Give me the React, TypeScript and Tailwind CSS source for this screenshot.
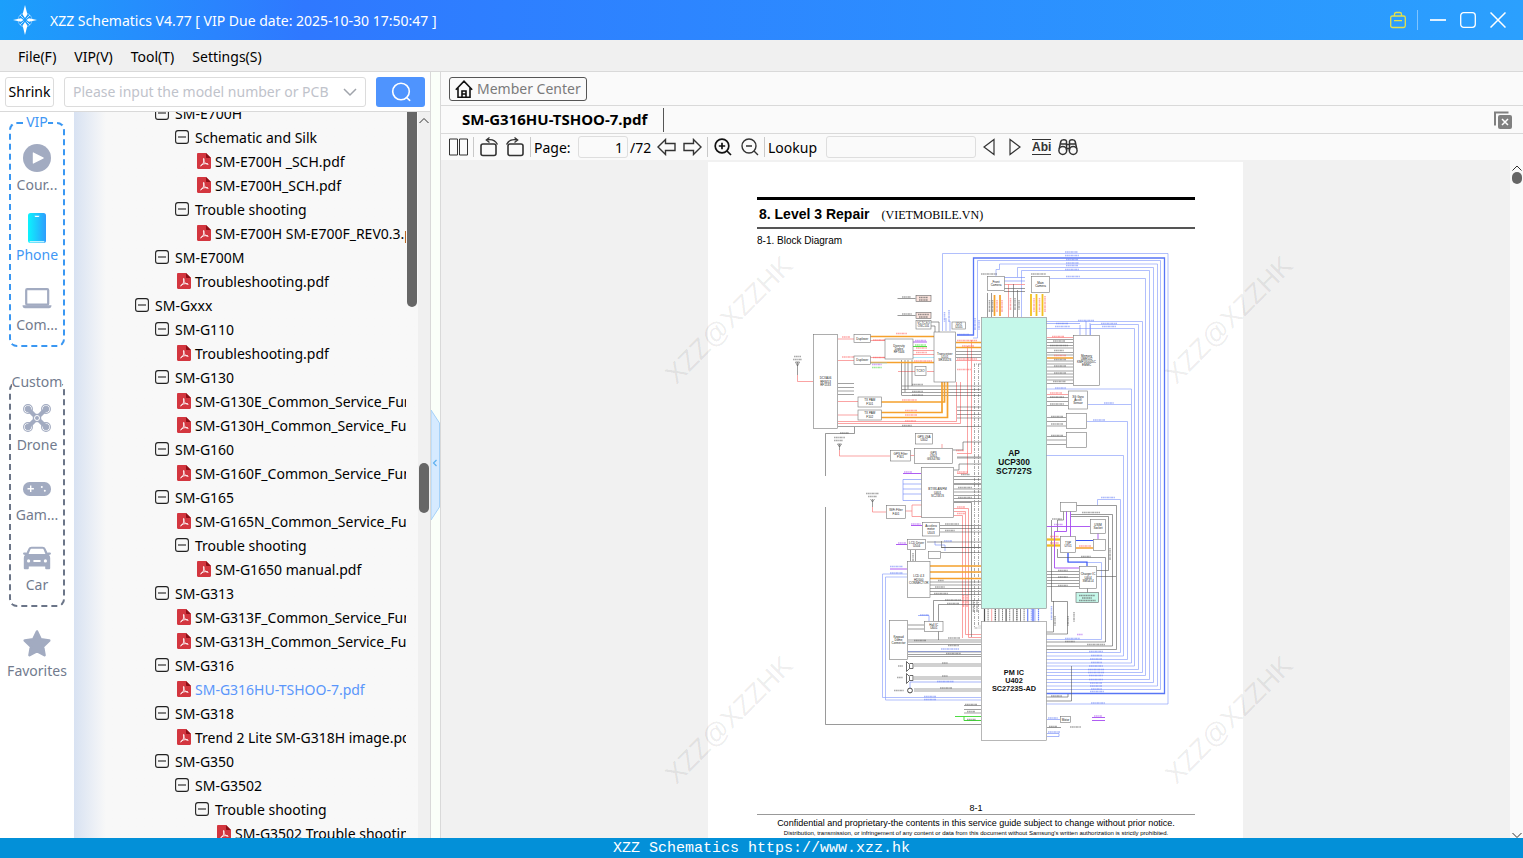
import { type ReactNode } from "react";

type TreeItem = {
	label: string;
	depth: number;
	kind: "folder" | "file";
	active?: boolean;
};

const folder = (depth: number, label: string): TreeItem => ({ depth, label, kind: "folder" });
const file = (depth: number, label: string, active = false): TreeItem => ({
	depth,
	label,
	kind: "file",
	active,
});

const tree: TreeItem[] = [
	folder(1, "SM-E700H"),
	folder(2, "Schematic and Silk"),
	file(3, "SM-E700H _SCH.pdf"),
	file(3, "SM-E700H_SCH.pdf"),
	folder(2, "Trouble shooting"),
	file(3, "SM-E700H SM-E700F_REV0.3.pdf"),
	folder(1, "SM-E700M"),
	file(2, "Troubleshooting.pdf"),
	folder(0, "SM-Gxxx"),
	folder(1, "SM-G110"),
	file(2, "Troubleshooting.pdf"),
	folder(1, "SM-G130"),
	file(2, "SM-G130E_Common_Service_Functions.pdf"),
	file(2, "SM-G130H_Common_Service_Functions.pdf"),
	folder(1, "SM-G160"),
	file(2, "SM-G160F_Common_Service_Functions.pdf"),
	folder(1, "SM-G165"),
	file(2, "SM-G165N_Common_Service_Functions.pdf"),
	folder(2, "Trouble shooting"),
	file(3, "SM-G1650 manual.pdf"),
	folder(1, "SM-G313"),
	file(2, "SM-G313F_Common_Service_Functions.pdf"),
	file(2, "SM-G313H_Common_Service_Functions.pdf"),
	folder(1, "SM-G316"),
	file(2, "SM-G316HU-TSHOO-7.pdf", true),
	folder(1, "SM-G318"),
	file(2, "Trend 2 Lite SM-G318H image.pdf"),
	folder(1, "SM-G350"),
	folder(2, "SM-G3502"),
	folder(3, "Trouble shooting"),
	file(4, "SM-G3502 Trouble shooting.pdf"),
];

const indents = ["pl-[61px]", "pl-[81px]", "pl-[101px]", "pl-[121px]", "pl-[141px]"];

const Logo = () => (
	<svg width="26" height="30" viewBox="0 0 26 30" fill="#fff">
		<circle cx="13" cy="15" r="7" fill="none" stroke="#7cc4ff" strokeWidth="1" />
		<path d="M13 0l2.4 9.5L13 13l-2.4-3.5zM13 30l2.4-9.5L13 17l-2.4 3.5zM1 15l8-1.8L11.5 15 9 16.8zM25 15l-8-1.8L14.5 15l2.5 1.8z" />
		<path d="M8 10l3.6 3.6M18 10l-3.6 3.6M8 20l3.6-3.6M18 20l-3.6-3.6" stroke="#bfe2ff" strokeWidth="1" />
	</svg>
);

const MinusBox = () => (
	<svg width="14" height="14" viewBox="0 0 14 14" fill="none" stroke="#222">
		<rect x=".6" y=".6" width="12.8" height="12.8" rx="2.4" strokeWidth="1.1" />
		<path d="M3 7h8" strokeWidth="1.1" />
	</svg>
);

const PdfIcon = () => (
	<svg width="14" height="16" viewBox="0 0 14 16">
		<path d="M1.2 0H9l5 5v9.8c0 .7-.5 1.2-1.2 1.2H1.2C.5 16 0 15.500 0 14.800V1.200C0 .5.5 0 1.200 0z" fill="#d3363f" />
		<path d="M9 0l5 5H10c-.6 0-1-.4-1-1z" fill="#8e1018" />
		<path
			d="M6.600 5.600c.9 0 .6 1.900 0 3.500-.7 1.800-1.800 3.400-2.600 3.900M6.600 5.600c-.6.600 0 2.600 1 3.700 1 1.200 2.400 2 3.400 2.100M3.800 12.300c1.500-1.400 4.200-2 6.800-1.600"
			fill="none"
			stroke="#fff"
			strokeWidth=".9"
			strokeLinecap="round"
		/>
	</svg>
);

const PlayIcon = () => (
	<svg width="28" height="30" viewBox="0 0 28 30">
		<circle cx="14" cy="15" r="14" fill="#a2abc1" />
		<path d="M9.800 9.800v10.400c0 .4.400.6.700.4l10-5.200c.4-.2.4-.6 0-.8l-10-5.200c-.3-.2-.7 0-.7.400z" fill="#fff" />
	</svg>
);

const PhoneIcon = () => (
	<svg width="28" height="30" viewBox="0 0 28 30">
		<defs>
			<linearGradient id="phone">
				<stop offset="0" stopColor="#0cf3fd" />
				<stop offset="1" stopColor="#2e9dfd" />
			</linearGradient>
		</defs>
		<rect x="5" y="0" width="18" height="30" rx="2.500" fill="url(#phone)" />
		<rect x="6.500" y="28" width="15" height="1.400" rx=".7" fill="#bff4ff" />
		<path d="M11.500 2.700h5c-.4 1-.8 1.300-1.500 1.300h-2c-.7 0-1.100-.3-1.500-1.300z" fill="#fff" />
	</svg>
);

const LaptopIcon = () => (
	<svg width="30" height="30" viewBox="0 0 30 30" fill="none" stroke="#a2abc1">
		<rect x="4.200" y="6.200" width="22" height="15.500" rx="1" strokeWidth="2.200" />
		<path d="M.5 22.300h29c0 1.900-1 2.900-2.500 2.900H3C1.500 25.200.5 24.200.5 22.300z" fill="#a2abc1" stroke="none" />
	</svg>
);

const rotors = [
	[5, 6],
	[23, 6],
	[5, 24],
	[23, 24],
];

const DroneIcon = () => (
	<svg width="28" height="30" viewBox="0 0 28 30">
		<path d="M6.500 7.500L14 15l7.500-7.500M6.500 22.500L14 15l7.500 7.500" fill="none" stroke="#a2abc1" strokeWidth="4.400" />
		{rotors.map(([x, y]) => (
			<g key={`${x}-${y}`} fill="none" stroke="#a2abc1">
				<circle cx={x} cy={y} r="4.400" strokeWidth="1.100" />
				<circle cx={x} cy={y} r="2.800" fill="#a2abc1" strokeWidth="1" />
			</g>
		))}
		<circle cx="14" cy="15" r="4.300" fill="#a2abc1" />
		<circle cx="14" cy="15" r="2.500" fill="none" stroke="#fff" strokeWidth="1" />
	</svg>
);

const GamepadIcon = () => (
	<svg width="28" height="30" viewBox="0 0 28 30">
		<rect x="0" y="9" width="28" height="14" rx="6.500" fill="#a2abc1" />
		<path d="M4.500 15.800h6.400M7.700 12.600v6.400" stroke="#fff" strokeWidth="1.400" />
		<circle cx="18.800" cy="14" r="1" fill="#fff" />
		<circle cx="21.800" cy="17.800" r="1" fill="#fff" />
	</svg>
);

const CarIcon = () => (
	<svg width="28" height="30" viewBox="0 0 28 30" fill="#a2abc1">
		<path
			fillRule="evenodd"
			d="M0 10.500c0-.9 1.300-1.500 3.500-.7L5.300 6c.6-1.600 1.700-2.300 3.300-2.300h10.800c1.600 0 2.700.7 3.300 2.300l1.800 3.800c2.200-.8 3.500-.2 3.500.7 0 .8-.8 1.300-2 1.500.8.8 1.200 1.800 1.200 3v10.300c0 .6-.3.900-.9.900h-3.200c-.6 0-.9-.3-.9-.9v-1.700H5.800v1.700c0 .6-.3.900-.9.900H1.700c-.6 0-.9-.3-.9-.9V15c0-1.200.4-2.200 1.200-3-1.200-.2-2-.7-2-1.500zM7.300 6.800L5.600 11h16.800l-1.700-4.200c-.3-.8-.7-1.100-1.500-1.100H8.800c-.8 0-1.200.3-1.500 1.100zM5.600 16.300a1.600 1.600 0 100 3.200 1.600 1.600 0 000-3.200zm16.800 0a1.600 1.600 0 100 3.200 1.600 1.600 0 000-3.200zM11.200 17a1 1 0 000 2h5.600a1 1 0 000-2z"
		/>
	</svg>
);

const StarIcon = () => (
	<svg width="28" height="30" viewBox="0 0 28 30">
		<path
			d="M14 2.500l3.700 7.800 8.500 1.200-6.200 6 1.500 8.700-7.500-4.200-7.500 4.200L8 17.500l-6.200-6 8.500-1.200z"
			fill="#a2abc1"
			stroke="#a2abc1"
			strokeWidth="2.600"
			strokeLinejoin="round"
		/>
	</svg>
);

const SideButton = ({ icon, label, active }: { icon: ReactNode; label: string; active?: boolean }) => (
	<button className="flex h-[70px] w-full shrink-0 flex-col items-center">
		<span className="flex h-[30px] items-center">{icon}</span>
		<span className={active ? "leading-6 text-[#3f97f5]" : "leading-6 text-[#727b8e]"}>{label}</span>
	</button>
);

const TitleBar = () => (
	<header className="flex h-10 shrink-0 items-center bg-linear-to-r from-[#1b9ffb] via-[#2f78ff] via-20% to-[#2ba0fe] pr-[17px] pl-3 text-white">
		<Logo />
		<h1 className="ml-3 flex-1">XZZ Schematics V4.77 [ VIP Due date: 2025-10-30 17:50:47 ]</h1>
		<button aria-label="License" className="mr-[11px]">
			<svg width="16" height="18" viewBox="0 0 16 18" fill="none" stroke="#e4e14a" strokeWidth="1.300">
				<rect x=".7" y="5" width="14.600" height="11.500" rx="1.800" />
				<path d="M4.500 5V3.300C4.500 2 5 1.500 6.300 1.500h3.400c1.300 0 1.800.5 1.800 1.800V5M4 9.700h8" />
			</svg>
		</button>
		<span className="mr-3 h-5 w-px bg-white/40" />
		<button aria-label="Minimize" className="mr-[14px]">
			<svg width="16" height="16" viewBox="0 0 16 16" stroke="#fff" strokeWidth="1.700">
				<path d="M0 8h16" />
			</svg>
		</button>
		<button aria-label="Maximize" className="mr-[14px]">
			<svg width="16" height="16" viewBox="0 0 16 16" fill="none" stroke="#fff" strokeWidth="1.300">
				<rect x=".7" y=".7" width="14.600" height="14.600" rx="3" />
			</svg>
		</button>
		<button aria-label="Close">
			<svg width="16" height="16" viewBox="0 0 16 16" stroke="#fff" strokeWidth="1.500">
				<path d="M.5.5l15 15M15.500.5l-15 15" />
			</svg>
		</button>
	</header>
);

const MenuBar = () => (
	<nav className="flex h-8 shrink-0 items-center gap-[18px] border-b border-[#d9d9d9] bg-[#f0f0f0] px-[18px] pt-0.5">
		<button>File(F)</button>
		<button>VIP(V)</button>
		<button>Tool(T)</button>
		<button>Settings(S)</button>
	</nav>
);

const SearchBar = () => (
	<div className="flex h-10 shrink-0 items-center border-b border-[#d9d9d9] bg-white px-[5px]">
		<button className="h-[30px] w-[49px] rounded-[3px] border border-[#dcdcdc]">Shrink</button>
		<div className="mx-2.5 flex h-[30px] flex-1 items-center rounded-[3px] border border-[#dcdcdc] px-2">
			<input
				aria-label="Model number"
				placeholder="Please input the model number or PCB"
				className="min-w-0 flex-1 outline-none placeholder:text-[#bfc3cb]"
			/>
			<button aria-label="History" className="pl-1">
				<svg width="14" height="14" viewBox="0 0 14 14" fill="none" stroke="#a0a4ab" strokeWidth="1.500">
					<path d="M1 4l6 6 6-6" />
				</svg>
			</button>
		</div>
		<button aria-label="Search" className="flex h-[30px] w-[49px] items-center justify-center rounded-[3px] bg-[#4f94fe]">
			<svg width="20" height="20" viewBox="0 0 20 20" fill="none" stroke="#fff" strokeWidth="1.600">
				<circle cx="10" cy="9.500" r="8.300" />
				<path d="M15.500 15.500l3.200 2.800" strokeLinecap="round" />
			</svg>
		</button>
	</div>
);

const SideNav = () => (
	<nav className="flex w-[74px] shrink-0 flex-col items-center bg-white pt-2.5">
		<section className="flex h-[225px] w-14 flex-col items-center rounded-lg border-2 border-dashed border-[#3a97f2]">
			<h2 className="-mt-3 mb-[11px] h-5 shrink-0 bg-white leading-5 text-[#3f97f5]">VIP</h2>
			<SideButton icon={<PlayIcon />} label="Cour..." />
			<SideButton icon={<PhoneIcon />} label="Phone" active />
			<SideButton icon={<LaptopIcon />} label="Com..." />
		</section>
		<section className="mt-[35px] flex h-[225px] w-14 flex-col items-center rounded-lg border-2 border-dashed border-[#6b7588]">
			<h2 className="-mt-3 mb-[11px] h-5 shrink-0 bg-white leading-5 text-[#727b8e]">Custom</h2>
			<SideButton icon={<DroneIcon />} label="Drone" />
			<SideButton icon={<GamepadIcon />} label="Gam..." />
			<SideButton icon={<CarIcon />} label="Car" />
		</section>
		<div className="mt-[22px]">
			<SideButton icon={<StarIcon />} label="Favorites" />
		</div>
	</nav>
);

const TreeView = () => (
	<div className="flex min-w-0 flex-1 overflow-hidden bg-[#f8f8f8] bg-linear-to-r from-[#d8e2f2] to-[#f8f8f8] to-[32px]">
		<ul className="-mt-[11px] min-w-0 flex-1 overflow-hidden">
			{tree.map((item, index) => (
				<li key={index} className={indents[item.depth]}>
					<button
						className={
							item.active
								? "flex h-6 items-center whitespace-nowrap text-[#5a96fb]"
								: "flex h-6 items-center whitespace-nowrap text-black"
						}
					>
						<span className="flex w-5 shrink-0">
							{item.kind === "folder" ? (
								<MinusBox />
							) : (
								<span className="pl-0.5">
									<PdfIcon />
								</span>
							)}
						</span>
						{item.label}
					</button>
				</li>
			))}
		</ul>
		<div className="w-3 shrink-0 pl-px">
			<div className="h-[195px] w-2.5 rounded-b-full bg-[#666]" />
		</div>
	</div>
);

const OuterScroll = () => (
	<div className="flex w-3 shrink-0 flex-col items-center bg-[#f0f0f0]">
		<svg className="mt-1 shrink-0" width="10" height="10" viewBox="0 0 10 10" fill="none" stroke="#333">
			<path d="M.5 7L5 2.500 9.500 7" />
		</svg>
		<div className="mt-[337px] h-[50px] w-2.5 shrink-0 rounded-full bg-[#666]" />
	</div>
);

const Splitter = () => (
	<div className="flex w-[11px] shrink-0 items-center border-x border-[#d9d9d9] bg-[#fafff9] pt-5">
		<button aria-label="Collapse panel">
			<svg width="9" height="110" viewBox="0 0 9 110">
				<path d="M0 0l8.500 13v84L0 110z" fill="#d6eaff" stroke="#a5d1f8" />
				<path d="M5.500 50L2.500 53l3 3" fill="none" stroke="#5eb0f0" strokeWidth="1.200" />
			</svg>
		</button>
	</div>
);

const Rotate = ({ flip }: { flip?: boolean }) => (
	<svg
		className={flip ? "-scale-x-100" : ""}
		width="20"
		height="20"
		viewBox="0 0 20 20"
		fill="none"
		stroke="#333"
		strokeWidth="1.600"
	>
		<rect x="2" y="7" width="15" height="11.500" rx="2" />
		<path d="M7.500 3c5-1.200 9 .5 11 4.500M10.500.5L7.300 3l3.200 2.500" strokeWidth="1.300" />
	</svg>
);

const Divider = () => <span className="h-5 w-px shrink-0 bg-[#c9c9c9]" />;

const Toolbar = () => (
	<div className="flex h-[26px] shrink-0 items-center bg-[#fafafa] pl-2">
		<button aria-label="Two pages" className="mr-1">
			<svg width="20" height="18" viewBox="0 0 20 18" fill="none" stroke="#333">
				<path d="M.5 1h8v16h-8zM10.500 1h8v16h-8z" />
			</svg>
		</button>
		<Divider />
		<button aria-label="Rotate left" className="ml-[5px]">
			<Rotate />
		</button>
		<button aria-label="Rotate right" className="mr-[5px] ml-1.5">
			<Rotate flip />
		</button>
		<Divider />
		<label htmlFor="page" className="ml-[3px] w-[44px]">
			Page:
		</label>
		<input
			id="page"
			defaultValue="1"
			className="h-[22px] w-[50px] rounded-[3px] border border-[#dedede] px-1 text-right"
		/>
		<span className="ml-0.5 w-[27px]">/72</span>
		<button aria-label="Previous page">
			<svg width="20" height="18" viewBox="0 0 20 18" fill="none" stroke="#333" strokeWidth="1.400">
				<path d="M1 9l7.500-7.500V5.500H18v7H8.500v4z" />
			</svg>
		</button>
		<button aria-label="Next page" className="mr-[5px] ml-[5px]">
			<svg width="20" height="18" viewBox="0 0 20 18" fill="none" stroke="#333" strokeWidth="1.400">
				<path d="M19 9l-7.500-7.500V5.500H2v7h9.500v4z" />
			</svg>
		</button>
		<Divider />
		<button aria-label="Zoom in" className="ml-1.5">
			<svg width="18" height="18" viewBox="0 0 18 18" fill="none" stroke="#111" strokeWidth="1.700">
				<circle cx="8" cy="8" r="6.800" />
				<path d="M4.800 8h6.400M8 4.800v6.400M13 13l4 4" />
			</svg>
		</button>
		<button aria-label="Zoom out" className="mr-[5px] ml-[9px]">
			<svg width="18" height="18" viewBox="0 0 18 18" fill="none" stroke="#333" strokeWidth="1.400">
				<circle cx="8" cy="8" r="7" />
				<path d="M5 8h6M13 13l4 4" />
			</svg>
		</button>
		<Divider />
		<label htmlFor="lookup" className="ml-[3px] w-[58px]">
			Lookup
		</label>
		<input id="lookup" className="h-[22px] w-[150px] rounded-[3px] border border-[#dedede] px-1" />
		<button aria-label="Find previous" className="mr-3.5 ml-[7px]">
			<svg width="12" height="18" viewBox="0 0 12 18" fill="none" stroke="#333" strokeWidth="1.200">
				<path d="M11 1.500v15L1 9z" />
			</svg>
		</button>
		<button aria-label="Find next" className="mr-[11px]">
			<svg width="12" height="18" viewBox="0 0 12 18" fill="none" stroke="#333" strokeWidth="1.200">
				<path d="M1 1.500v15L11 9z" />
			</svg>
		</button>
		<button className="mr-[7px] h-4 border-y border-[#333] font-['Liberation_Sans'] text-[12px] leading-[14px] font-bold text-[#333]">
			Abi
		</button>
		<button aria-label="Search document">
			<svg width="20" height="18" viewBox="0 0 20 18" fill="none" stroke="#333" strokeWidth="1.500">
				<circle cx="4.800" cy="12.500" r="3.900" />
				<circle cx="15.200" cy="12.500" r="3.900" />
				<path d="M1.200 11L2.800 3.500C3.200 1.500 8 1 8.500 3.200v9M18.800 11l-1.600-7.500C16.800 1.500 12 1 11.500 3.200v9M8.500 6.500h3M8.500 10.500h3M3 6h5M12 6h5" />
			</svg>
		</button>
	</div>
);

const nested = [
	"M942.500 331V253.500H1168V704H1046",
	"M977.500 338H973M977.500 338V260.500H1160.500V689.500H1046",
	"M996 276V269.500H999.500V264H1157.500V686H1046",
	"M1017.500 277V267.500H1153.500V682.500H1046",
	"M1021.500 317V270.500H1149.500V679.500H1046",
	"M1050 278.500H1145.500V675.500H1046",
	"M1046 321.500H1142.500V672.500H1046",
	"M1090.500 335V324.500H1138.500V669.500H1046",
	"M1046 328.500H1134.500V666H1046",
	"M1046 389H1131.500V663H1046M1088 404.500H1131",
	"M1087 421.500H1127.500V659.500H1046",
	"M1046 455.500H1123.500V656H1046",
	"M1097.500 505V499.500H1120.500V652.500H1046",
	"M1068 553V562.500H1101.500V639.500H1046",
];

// [x, y, width, height, caption lines]
const blocks: [number, number, number, number, string[]][] = [
	[813.5, 334.500, 24, 94, ["DCXA06", "RF8453", "RF1533"]],
	[854, 334.500, 16.500, 8, ["Duplexer"]],
	[854, 356, 16.500, 8.500, ["Duplexer"]],
	[885, 339, 28, 20, ["Diversity", "Diplex", "RF7446"]],
	[934, 332, 21.500, 50, ["Transceiver", "U101", "SR3532S"]],
	[952, 322, 13.500, 7, ["LDO", "U105"]],
	[916, 320.500, 15, 8.500, ["VCTCXO", "OSC101"]],
	[915, 366.500, 11, 9, ["TCXO"]],
	[858, 397, 23.500, 10, ["TX PAM", "F101"]],
	[858, 410, 23.500, 10, ["TX PAM", "F102"]],
	[987.500, 276.500, 17, 14, ["Front", "Camera"]],
	[1031.500, 276.500, 18, 16, ["Main", "Camera"]],
	[1073.500, 335.500, 26, 50, ["Memory", "UME502", "KMF5X0005C", "EMMC"]],
	[1068.500, 391, 19, 18, ["3G Gyro", "Accel", "Sensor"]],
	[1066.500, 413.500, 20, 15, []],
	[1066.500, 432.500, 20, 15, []],
	[890.500, 450.500, 20, 10.500, ["GPS Filter", "F301"]],
	[914.500, 448.500, 38, 15, ["GPS", "U301", "GSX4780"]],
	[915.500, 433.500, 17, 10.500, ["GPS LNA", "U302"]],
	[921.500, 467.500, 32, 50, ["BT/WLAN/FM", "U401", "SC2331S"]],
	[886.500, 505.500, 19, 13, ["WiFi Filter", "F401"]],
	[922.500, 522.500, 17, 13.500, ["Accelero", "meter", "U503"]],
	[907.500, 539.500, 18, 10, ["LCD Driver", "U504"]],
	[928.500, 551.500, 12, 7, []],
	[907.500, 561.500, 22.500, 36, ["LCD 4.3", "HD500", "CONNECTOR"]],
	[889.500, 620.500, 18, 39, ["Keypad", "Dome", "Connector"]],
	[924.500, 621.500, 18.500, 10, ["Hall IC", "U601"]],
	[1060.500, 502.500, 16, 9, []],
	[1090.500, 519.500, 15, 14, ["USIM", "Socket"]],
	[1060.500, 536.500, 15, 16, ["TSP", "U701"]],
	[1093.500, 539.500, 12, 11, []],
	[1079.500, 566.500, 17, 22, ["Charger IC", "U404", "SM5414"]],
	[1060.500, 716.500, 10, 6, ["Motor"]],
];

// lines to the AP and the PM IC, as [x1, x2, y]
const greyWires: [number, number, number][] = [
	[838, 981, 426.500],
	...[383.500, 387.500, 391, 394.500].map((y): [number, number, number] => [838, 854, y]),
	...[351.500, 354.500, 357.500].map((y): [number, number, number] => [956, 981, y]),
	...[386, 389.500, 392.500, 395.500].map((y): [number, number, number] => [902, 981, y]),
	...[407, 410.500, 414.500, 418, 457, 458].map((y): [number, number, number] => [957, 981, y]),
	...[476.500, 479.500, 483.500, 484.500, 489, 492, 495.500, 498.500, 501.500].map((y): [number, number, number] => [
		954, 981, y,
	]),
	...[525.500, 528.500, 532].map((y): [number, number, number] => [940, 981, y]),
	...[542, 547.500, 552.500].map((y): [number, number, number] => [941, 981, y]),
	...[582, 585, 588.500, 591.500, 594.500].map((y): [number, number, number] => [930, 981, y]),
	...[640, 642, 644.500, 652, 654.500, 656.500].map((y): [number, number, number] => [908, 981, y]),
	...[664, 666, 677, 679, 689, 691].map((y): [number, number, number] => [914, 981, y]),
	...[705.500, 709.500, 713, 720.500].map((y): [number, number, number] => [964, 981, y]),
	...[339.500, 342.500, 345.500, 348, 352.500, 355, 361, 364, 367, 371, 374, 377, 380, 383.500].map(
		(y): [number, number, number] => [1047, 1073, y],
	),
	...[397.500, 401.500, 405.500].map((y): [number, number, number] => [1047, 1068, y]),
	...[417.500, 421.500, 426, 436.500, 440, 444.500].map((y): [number, number, number] => [1047, 1066, y]),
	...[571.500, 574.500, 577.500, 580.500, 583.500, 586.500].map((y): [number, number, number] => [1047, 1079, y]),
];

// net names, as [x, y, width]
const greyNames: [number, number, number][] = [
	[902, 297, 9],
	[902, 314, 10],
	[981, 274, 16],
	[1031, 274, 15],
	[912, 384.500, 11],
	[912, 391.500, 11],
	[912, 395, 11],
	[902, 425.500, 10],
	[840, 433, 9],
	[961, 474.500, 9],
	[958, 487.500, 14],
	[958, 497.500, 14],
	[945, 524, 14],
	[945, 530.500, 10],
	[938, 580.500, 6],
	[935, 587, 10],
	[934, 593.500, 14],
	[945, 600, 16],
	[947, 603.500, 12],
	[948, 638, 12],
	[914, 640.500, 12],
	[948, 645.500, 11],
	[946, 653.500, 15],
	[942, 663, 6],
	[942, 676, 6],
	[940, 688, 12],
	[965, 704.500, 12],
	[967, 711.500, 8],
	[967, 719.500, 9],
	[1053, 341, 12],
	[1050, 345.500, 18],
	[1054, 350.500, 10],
	[1054, 359.500, 12],
	[1054, 366, 12],
	[1054, 373, 12],
	[1053, 381.500, 13],
	[1050, 397, 14],
	[1050, 404, 14],
	[1051, 416.500, 12],
	[1051, 424, 12],
	[1051, 435.500, 12],
	[1079, 415.500, 6],
	[1079, 434.500, 6],
	[1058, 570.500, 10],
	[1058, 577, 10],
	[1058, 585.500, 10],
	[1052, 519, 10],
	[1082, 512.500, 18],
	[1081, 556.500, 10],
	[1065, 641.500, 10],
	[1087, 644.500, 18],
	[1051, 696, 11],
	[1049, 726.500, 8],
	[1070, 727, 11],
	[898, 666, 5],
	[897, 677.500, 6],
	[894, 690.500, 10],
	[866, 493.500, 13],
	[868, 496.500, 9],
	[834, 437.500, 11],
	[834, 440.500, 9],
	[794, 356.500, 7],
	[793, 359.500, 9],
];

const blueNames: [number, number, number][] = [
	[1065, 252, 13],
	[1065, 255.500, 14],
	[1066, 259.500, 12],
	[1066, 263, 13],
	[1066, 265.500, 12],
	[1065, 269.500, 14],
	[1066, 276.500, 14],
	[1078, 320.500, 16],
	[1056, 323.500, 12],
	[1055, 326.500, 15],
	[1101, 323.500, 16],
	[1102, 326.500, 14],
	[1055, 388, 11],
	[1104, 403, 10],
	[1093, 420, 12],
	[1101, 497.500, 14],
	[1065, 638.500, 15],
	[1089, 651.500, 14],
	[1091, 655.500, 11],
	[1090, 659, 12],
	[1091, 662.500, 11],
	[1089, 666, 14],
	[1088, 669.500, 16],
	[1088, 672.500, 16],
	[1089, 675.500, 14],
	[1089, 679.500, 14],
	[1090, 683, 12],
	[1090, 686, 12],
	[1091, 689, 11],
	[1090, 691.500, 14],
	[1091, 703, 14],
	[1048, 718, 10],
	[1048, 732, 12],
	[890, 566.500, 13],
	[890, 573, 13],
	[924, 696.500, 12],
	[924, 699.500, 12],
	[941, 649, 18],
	[937, 681.500, 17],
	[920, 615, 9],
	[957, 334.500, 12],
	[944, 541, 8],
];

const redNames: [number, number, number][] = [
	[896, 333.500, 11],
	[842, 337, 8],
	[873, 340, 13],
	[842, 357, 12],
	[873, 357.500, 13],
	[916, 348, 11],
	[916, 352.500, 11],
	[914, 361, 18],
	[902, 400, 15],
	[905, 410.500, 12],
	[905, 415, 12],
	[905, 421, 11],
	[957, 340.500, 20],
	[962, 346, 12],
	[957, 359, 20],
	[957, 369.500, 14],
	[956, 450.500, 8],
	[957, 472, 11],
	[957, 507, 8],
	[957, 513.500, 8],
	[1052, 336.500, 12],
	[1054, 355.500, 12],
	[1050, 393, 12],
	[1050, 536.500, 9],
	[1050, 543, 9],
	[1079, 546, 12],
];

const names = (list: [number, number, number][]) => list.map(([x, y, w]) => `M${x} ${y}h${w}`).join("");

const BlockDiagram = () => (
	<svg
		className="w-full"
		viewBox="757 248 438 499"
		fill="none"
		strokeWidth=".6"
		fontFamily="Liberation Sans"
		role="img"
		aria-label="Block diagram"
	>
		<path d={nested.join("")} stroke="#8fa3fa" strokeWidth=".7" />
		<path d="M957 335H973.500V258H1164.500V693.500H1046" stroke="#5876f5" strokeWidth="1.300" />
		<path d="M981 697.500H882.500V574H907M981 700H885.500V577H907" stroke="#8fa3fa" strokeWidth=".7" />
		<path
			d="M903 479.500h18.500M903 484h18.500M903 489h18.500M903 494h18.500M903 500.500h18.500M903 479.500v21M908 651.500h73M910 688v-6h71M1004 277.500h21M1004 281h21M1090 335v-12M1086 335v-14M1080 335v-10M1046 323.500h34M946 331v-13M950 331v-10M1047 719.500h13M1047 733.500h12v3h-12M918 615.500h11v6M935 541v4h10v6"
			stroke="#6b84f7"
		/>
		<path d="M1076 540.500h17M1068 553v9h19v4M1033 609v13" stroke="#3b56f5" strokeWidth="1.200" />

		<path
			d="M838 339H854M838 360.500H854M870 340.500h15M870 357.500h15M913 350.500h21M913 354.500h21M934 371.500h-7M915 371.500h-17M838 401.500h20M838 415h20M838 421.500H956.500V382M838 423.500H960.500V382M797.500 375V381.500H813M839.500 450V456H890M910 455.500h4M872.500 507V512H886M905 511h7v-6h10M912 511v5.500h10M957 453.500H971.500V340M957 473.500H967.500V346M954 508.500H968.500V637.500H981M954 511.500H965.500V634.500H981M954 515.500H962.500V638M1004 284.500h21M1008.500 284v33M956 360.500h25M1047 337.500h26M1047 394.500h21M942 444v4"
			stroke="#f87b7b"
			strokeWidth=".7"
		/>
		<path d={greyWires.map(([a, b, y]) => `M${a} ${y}H${b}`).join("")} stroke="#444" strokeWidth=".5" />
		<path
			d="M825.500 476V433.500H854.500V427M825.500 507V724.500H981M797.500 362v13M795.500 362l2 4 2-4zM839.500 444v6M837.500 444l2 3 2-3zM872.500 499v8M870.500 499l2 3 2-3M901.500 360v35.500M905 360v32M908 360v29M912 360v26M897.500 298.500h18M897.500 315.500h18M931 322h8v10M931 326h4v6M981 442h-18v8h-10M981 464h-22v6h-5M910.500 550v11M915.500 550v11M981 547.500H941.500V541M941 542h-14M981 600.500H933.500V621M981 604.500H938.500V640M908 625h16M908 629h16M1004 288.500h21M1004 291.500h21M1013.500 284v33M1017.500 290v27M987.500 293v24M991.500 293v24M1076.500 505.500H1116.500V649.500H1046M1071 514.500H1112.500V646H1046M1071 516.500H1108.500V570.500h-12M1096 576.500h20M1057.500 532v-12h6v-9M1051.500 520V601.500H1067.500V634H1046M1053.500 601V632H1046M1057.500 549V557.500H1105.500V642H1046M1071.500 666V701H1046M1068 694V697H1046M1047 727.500h14M1087.500 588v5M954 502.500H971.500V637"
			stroke="#555"
			strokeWidth=".6"
		/>
		<path
			d="M974.500 364V628H981M978.500 364V626H981M981 364h-7"
			stroke="#555"
			strokeWidth=".5"
			strokeDasharray="3 1 1 1"
		/>

		{/* power rails */}
		<path
			d="M870 336.500H934M870 362.500H934M881 402H944.500V382M881 412.500H942V382M881 417.500H947.500V382M956 342.500H981M956 347.500H981M930 566H981M930 572H981M930 578.500H981M1047 358H1073M994.500 295v21M1000 295v21M1047 539.500h13M1047 545.500h13M1076 548h17"
			stroke="#f5a12c"
			strokeWidth="1.700"
		/>
		<path d="M1031 294v22M1036.500 294v22M1042.500 294v22M1047 539.500h13M1047 545.500h13" stroke="#f2c11f" strokeWidth="1.800" />
		<path
			d="M1047 526.500H1090M1066.500 511V531.500H1054.500V568H1079M1070.500 511v26M1098 533v6M1092 717.500h13M1092 720.500h13M903 473.500h18M911 525.500h11M896 544.500h11M913 342h14M890 569h17"
			stroke="#a64bf0"
			strokeWidth=".9"
		/>
		<path d="M955 716.500H981M964 716.500v4h17M913 346.500h14" stroke="#3ad82e" strokeWidth=".9" />
		<path d="M913 357.500h21M870 363h17" stroke="#7fd9f2" strokeWidth=".6" />

		{/* bus between the two chips */}
		{Array.from({ length: 16 }, (_, i) => (
			<path
				key={i}
				d={`M${984.500 + i * 3.600} 609v13`}
				stroke={i === 2 ? "#f87b7b" : i > 11 ? "#6b84f7" : "#555"}
				strokeWidth={i % 3 === 0 ? 1.200 : 0.7}
				strokeDasharray={i % 2 ? "1.500 .5" : undefined}
			/>
		))}
		<g strokeWidth="1.500" strokeDasharray="1.300 .4 2 .5" opacity=".5">
			<path d={names(greyNames)} stroke="#555" />
			<path d={names(blueNames)} stroke="#5b76f6" />
			<path d={names(redNames)} stroke="#f55" />
			<path
				d="M989.500 300v12M992.500 300v12M1015 298v12M1019 300v10M973.500 600v12M977 600v12M1055 616v10M1068 616v10M1074 612v10M1110 548v12M913 553v8"
				stroke="#555"
			/>
			<path d="M997 300v12M1002 300v12M1010.500 298v12M1034 298v14M1039.500 298v14M1045 296v16M963.500 595v12M967 595v12" stroke="#f55" />
			<path d="M1051.500 606v14M944.500 312v10M949 310v12M975 318v12M979 320v10" stroke="#5b76f6" />
			<path d="M872 367.500h10M915 345h11" stroke="#3ad82e" />
			<path d="M904 472h8M911 524h10M898 543h8M872 364.500h10M915 340.500h11M1054 524.500h9M1077 634.500h6M1094 716h8" stroke="#a64bf0" />
		</g>

		<g stroke="#666" strokeWidth=".6">
			<rect x="916" y="295.500" width="15" height="6" fill="#fbe3dd" />
			<rect x="916" y="312.500" width="15" height="6" fill="#fbe3dd" />
			<rect x="1076" y="592.500" width="22.500" height="10" fill="#c5f8ea" />
		</g>
		<path
			d="M919 297.500h9M919 300h9M918 314.500h11M919 317h9M1079 595.500h16M1082 598h10M1079 600.500h17"
			stroke="#666"
			strokeWidth="1.300"
			strokeDasharray="1.300 .4"
			opacity=".7"
		/>
		{blocks.map(([x, y, w, h, lines]) => (
			<g key={`${x}-${y}`}>
				<rect x={x} y={y} width={w} height={h} fill="#fff" stroke="#777" />
				<text fontSize="3" textAnchor="middle" fill="#222">
					{lines.map((line, i) => (
						<tspan key={i} x={x + w / 2} y={y + h / 2 + 1 + (i - (lines.length - 1) / 2) * 3.300}>
							{line}
						</tspan>
					))}
				</text>
			</g>
		))}

		{/* speakers and microphone */}
		<path
			d="M906.500 661.500l3 3v4l-3 3zM909.500 663.500h3.500v5h-3.500M906.500 673.500l3 3v4l-3 3zM909.500 675.500h3.500v5h-3.500"
			stroke="#444"
			strokeWidth=".8"
		/>
		<circle cx="910" cy="690.500" r="2.400" stroke="#333" strokeWidth=".9" fill="#fff" />

		<rect x="981.500" y="317.500" width="65" height="291" fill="#c5f8ea" stroke="#888" />
		<rect x="981.500" y="621.500" width="65" height="119" fill="#fff" stroke="#888" />
		<g fill="#111" fontWeight="bold" textAnchor="middle" fontSize="8.400">
			<text>
				<tspan x="1014" y="456">AP</tspan>
				<tspan x="1014" y="465">UCP300</tspan>
				<tspan x="1014" y="474">SC7727S</tspan>
			</text>
			<text fontSize="7.300">
				<tspan x="1014" y="675">PM IC</tspan>
				<tspan x="1014" y="683">U402</tspan>
				<tspan x="1014" y="691">SC2723S-AD</tspan>
			</text>
		</g>
	</svg>
);

const Watermark = ({ className }: { className: string }) => (
	<span
		className={`pointer-events-none absolute -translate-x-1/2 -translate-y-1/2 -rotate-45 font-['Liberation_Sans'] text-[27px] text-black/8 ${className}`}
	>
		XZZ@XZZHK
	</span>
);

const PdfPage = () => (
	<article className="relative mt-0.5 h-full w-[535px] shrink-0 bg-white pt-[35px] pr-12 pl-[49px] font-['Liberation_Sans'] text-black">
		<h2 className="flex h-8 items-center border-t-[3px] border-b-2 border-t-black border-b-[#555] pt-0.5 pl-0.5 text-[14px] font-bold">
			8. Level 3 Repair
			<span className="ml-3 font-['Liberation_Serif'] text-[12px] font-normal">(VIETMOBILE.VN)</span>
		</h2>
		<h3 className="mt-1 h-[15px] text-[10px] leading-[15px]">8-1. Block Diagram</h3>
		<BlockDiagram />
		<p className="mt-[56px] h-2.5 text-center text-[9px] leading-[10px]">8-1</p>
		<footer className="mt-px border-t border-[#999] pt-0.5 text-center whitespace-nowrap">
			<p className="h-3 text-[9px] leading-3">
				Confidential and proprietary-the contents in this service guide subject to change without prior notice.
			</p>
			<p className="text-[6px] leading-[9px]">
				Distribution, transmission, or infringement of any content or data from this document without Samsung's written
				authorization is strictly prohibited.
			</p>
		</footer>
		<Watermark className="top-[158px] left-[21px]" />
		<Watermark className="top-[158px] left-[521px]" />
		<Watermark className="top-[558px] left-[21px]" />
		<Watermark className="top-[558px] left-[521px]" />
	</article>
);

const Viewer = () => (
	<main className="flex min-w-0 flex-1 flex-col bg-[#fafafa]">
		<div className="flex h-[34px] shrink-0 items-center border-b border-[#d9d9d9] pl-2">
			<button className="flex h-6 items-center gap-1 rounded-[3px] border border-[#555] px-[5px] text-[#7a7a7a]">
				<svg width="18" height="18" viewBox="0 0 18 18" fill="none" stroke="#111" strokeWidth="1.600">
					<path d="M.8 9.800L9 1.200l8.200 8.600M3 8v9.200h12V8M7 17v-6h4v6M7 14h4" />
				</svg>
				Member Center
			</button>
		</div>
		<div className="flex h-7 shrink-0 items-center border-b border-[#d9d9d9] pr-[11px] pl-[21px]">
			<button className="h-6 border-r border-[#555] pr-4 text-[15px] font-bold text-black">SM-G316HU-TSHOO-7.pdf</button>
			<button aria-label="Close all tabs" className="ml-auto">
				<svg width="18" height="18" viewBox="0 0 18 18" fill="none">
					<path d="M1 14.500V1.500h13.500" stroke="#808080" strokeWidth="2" />
					<rect x="4" y="4" width="14" height="14" rx="2" fill="#808080" />
					<path d="M8 8l6 6M14 8l-6 6" stroke="#fff" strokeWidth="1.500" />
				</svg>
			</button>
		</div>
		<Toolbar />
		<div className="flex min-h-0 flex-1">
			<div className="flex min-w-0 flex-1 justify-center overflow-hidden bg-[#f1f1f1]">
				<PdfPage />
			</div>
			<div className="flex w-[13px] shrink-0 flex-col items-center pt-1">
				<svg className="shrink-0" width="10" height="8" viewBox="0 0 10 8" fill="none" stroke="#333">
					<path d="M.5 6.500L5 2l4.500 4.500" />
				</svg>
				<div className="h-3 w-2.5 rounded-full bg-[#666]" />
				<svg className="mt-auto shrink-0" width="10" height="6" viewBox="0 0 10 6" fill="none" stroke="#333">
					<path d="M.5 1L5 5.500 9.500 1" />
				</svg>
			</div>
		</div>
	</main>
);

export default function App() {
	return (
		<div className="flex h-screen flex-col overflow-hidden bg-white font-['Noto_Sans',sans-serif] text-[14px] text-black">
			<TitleBar />
			<MenuBar />
			<div className="flex min-h-0 flex-1">
				<aside className="flex w-[430px] shrink-0 flex-col">
					<SearchBar />
					<div className="flex min-h-0 flex-1">
						<SideNav />
						<TreeView />
						<OuterScroll />
					</div>
				</aside>
				<Splitter />
				<Viewer />
			</div>
			<footer className="h-5 shrink-0 bg-[#0390d8] text-center font-['Liberation_Mono'] text-[15px] leading-[22px] text-white">
				XZZ Schematics https://www.xzz.hk
			</footer>
		</div>
	);
}
